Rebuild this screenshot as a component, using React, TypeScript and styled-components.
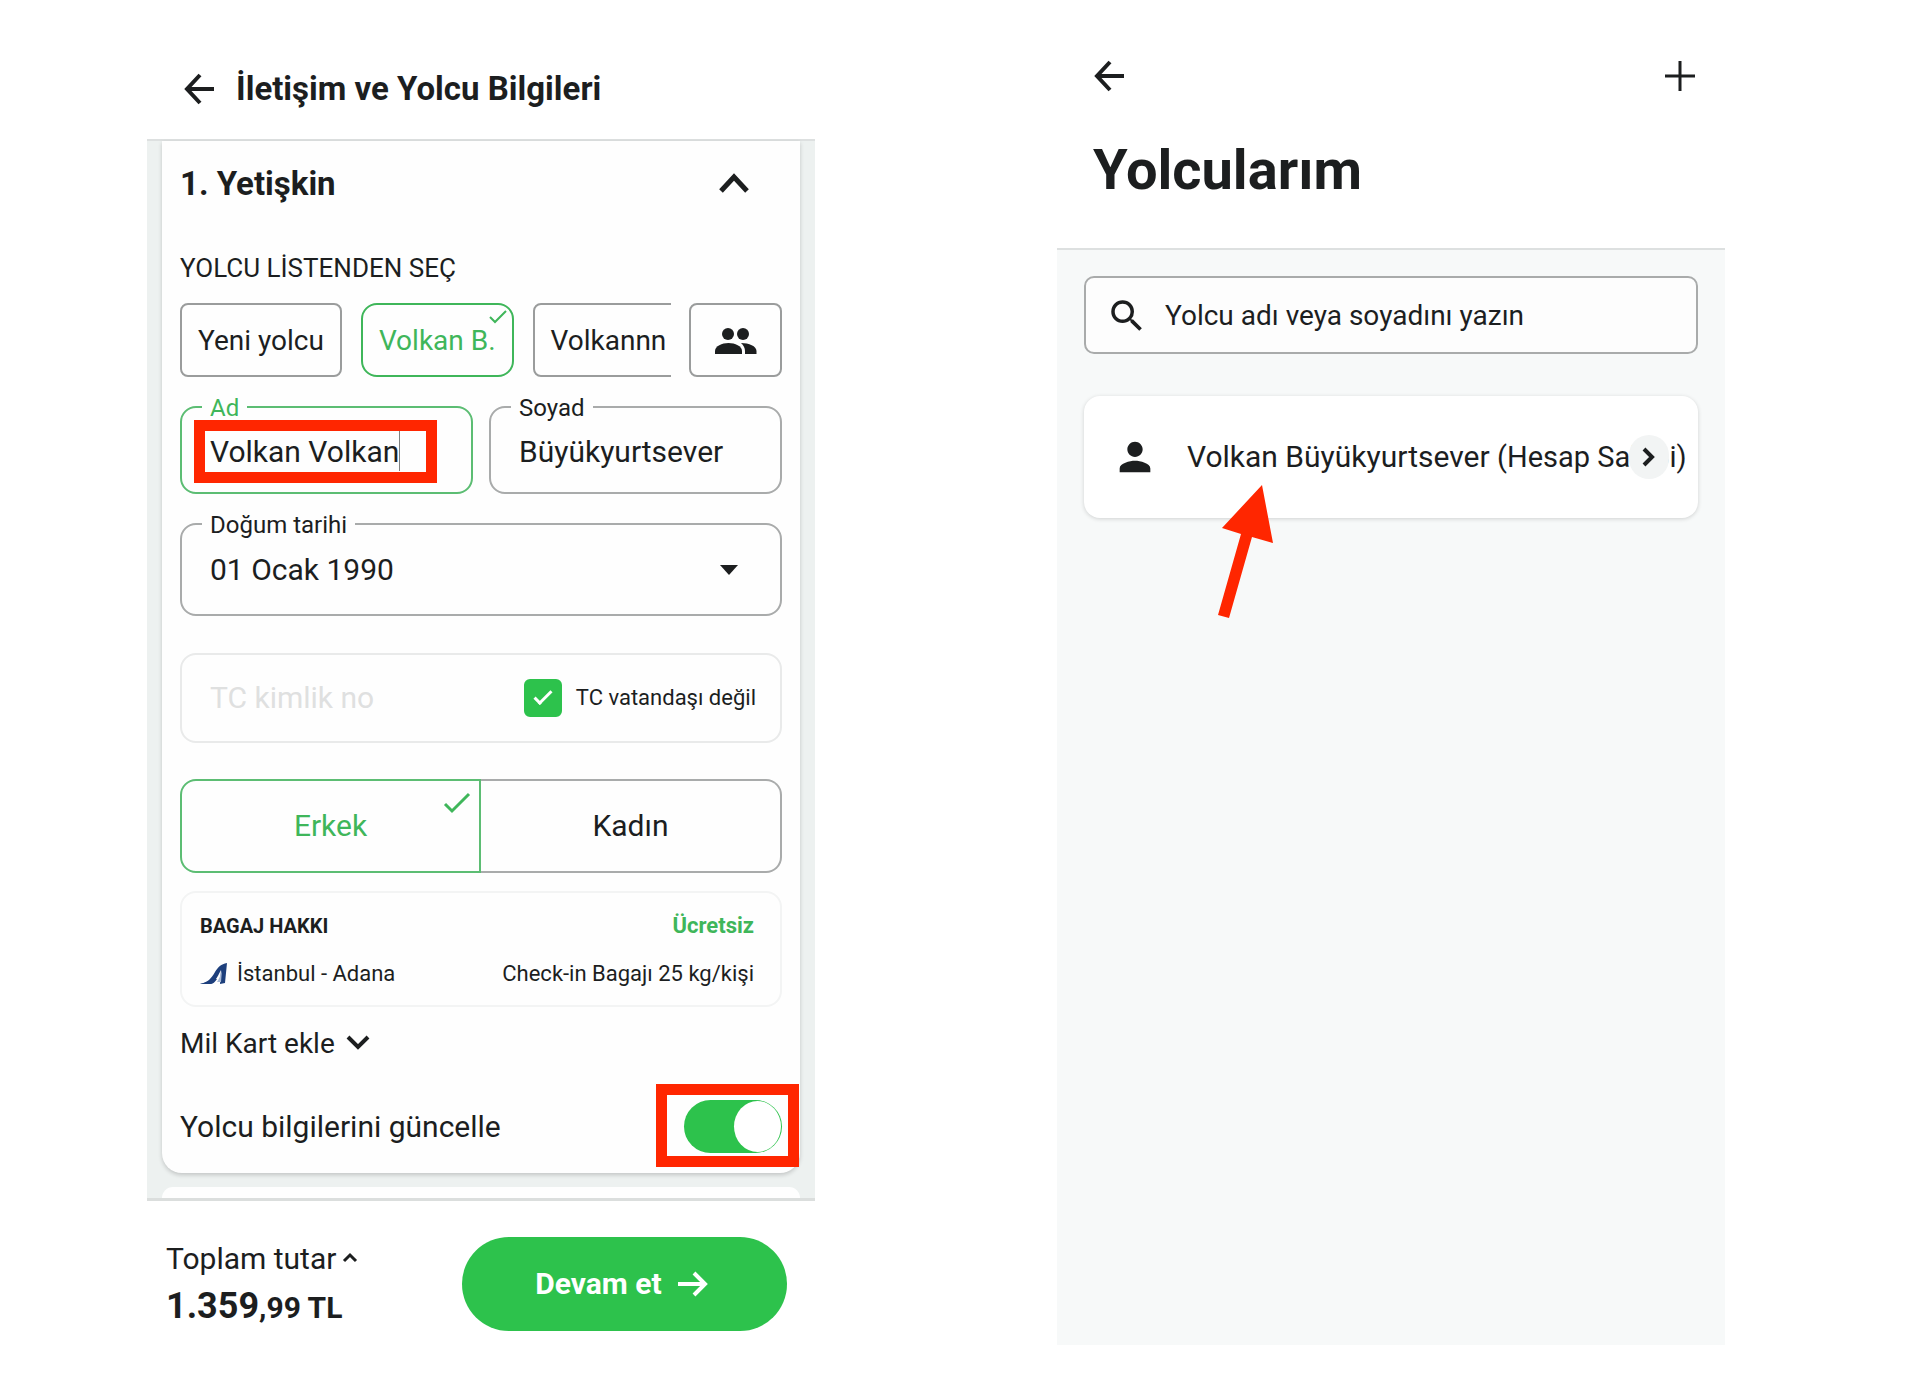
import React, { useState } from "react";
import styled, { createGlobalStyle, css } from "styled-components";
import { MdPerson, MdSearch } from "react-icons/md";

const ink = "#1c1e1f";
const green = "#2dc24c";
const greenInk = "#3fb65a";
const line = "#9a9c9c";
const red = "#ff2600";

const GlobalStyle = createGlobalStyle`
  *, *::before, *::after { box-sizing: border-box; }
  body {
    margin: 0;
    background: #fff;
    color: ${ink};
    font-family: Roboto, "Noto Sans", sans-serif;
    font-size: 30px;
    line-height: 36px;
  }
  button, input { font: inherit; color: inherit; }
  h1, h2, h3, p { margin: 0; }
  svg { display: block; flex: none; }
`;

const Page = styled.main`
  display: grid;
  grid-template-columns: minmax(0, 1fr) minmax(0, 1fr);
  gap: 242px;
  padding: 0 207px 36px 147px;
`;

const Screen = styled.section`
  display: flex;
  flex-direction: column;
`;

const IconButton = styled.button`
  display: flex;
  padding: 0;
  border: 0;
  background: none;
  cursor: pointer;
`;

/* ---------- Passenger form ---------- */

const FormHeader = styled.header`
  display: flex;
  align-items: center;
  gap: 21px;
  padding: 71px 36px 32px;
  border-bottom: 2px solid #dde0e0;
`;

const FormTitle = styled.h1`
  font-size: 33px;
  line-height: 36px;
  font-weight: 700;
`;

const FormBody = styled.div`
  padding: 0 15px;
  background: #edf1f0;
`;

const PassengerCard = styled.div`
  padding: 25px 18px 20px;
  background: #fefefe;
  border-radius: 0 0 20px 20px;
  box-shadow: 0 2px 4px rgba(0, 0, 0, 0.18);
`;

const CardHeading = styled.div`
  display: flex;
  align-items: center;
  justify-content: space-between;
  padding-right: 32px;
`;

const CardTitle = styled.h2`
  font-size: 33px;
  line-height: 36px;
  font-weight: 700;
`;

const ListLabel = styled.p`
  margin-top: 48px;
  font-size: 26px;
  line-height: 36px;
`;

const PickRow = styled.div`
  display: flex;
  gap: 18px;
  margin-top: 17px;
`;

const ChipStrip = styled.div`
  display: flex;
  flex: 1;
  gap: 19px;
  min-width: 0;
  overflow: hidden;
`;

const Chip = styled.button<{ $selected?: boolean }>`
  position: relative;
  flex: none;
  height: 74px;
  padding: 2px 16px 0;
  border: 2px solid ${(p) => (p.$selected ? greenInk : line)};
  border-radius: ${(p) => (p.$selected ? 16 : 8)}px;
  background: none;
  color: ${(p) => (p.$selected ? greenInk : ink)};
  font-size: 28px;
  white-space: nowrap;
`;

const ChipTick = styled.svg`
  position: absolute;
  top: 4px;
  right: 4px;
`;

const PeopleButton = styled(Chip)`
  display: flex;
  align-items: center;
  justify-content: center;
  width: 93px;
`;

const FieldRow = styled.div`
  display: grid;
  grid-template-columns: 1fr 1fr;
  gap: 16px;
  margin-top: 17px;
`;

const Field = styled.fieldset<{ $active?: boolean }>`
  position: relative;
  min-width: 0;
  margin: 0;
  padding: 0 28px;
  border: 2px solid ${(p) => (p.$active ? "#5cbd73" : "#a9abab")};
  border-radius: 16px;
`;

const Legend = styled.legend<{ $active?: boolean }>`
  margin-left: -8px;
  padding: 2px 8px 0;
  font-size: 24px;
  line-height: 24px;
  color: ${(p) => (p.$active ? greenInk : ink)};
`;

const TextInput = styled.input`
  width: 100%;
  height: 44px;
  margin: 9px 0 19px;
  padding: 0;
  border: 0;
  outline: 0;
  background: none;
`;

const Caret = styled.span`
  position: absolute;
  top: 11px;
  left: 217px;
  width: 1px;
  height: 40px;
  background: #7d8080;
`;

const NameHighlight = styled.span`
  position: absolute;
  top: 0;
  left: 12px;
  width: 243px;
  height: 63px;
  border: 11px solid ${red};
  pointer-events: none;
`;

const DateField = styled(Field)`
  display: block;
  margin-top: 17px;
`;

const DateButton = styled.button`
  display: flex;
  align-items: center;
  justify-content: space-between;
  width: 100%;
  height: 44px;
  margin: 11px 0 22px;
  padding: 0 14px 0 0;
  border: 0;
  background: none;
  text-align: left;
`;

const IdRow = styled.div`
  display: flex;
  align-items: center;
  height: 90px;
  margin-top: 37px;
  padding: 0 24px 0 28px;
  border: 2px solid #e9eaea;
  border-radius: 16px;
`;

const IdInput = styled.input`
  flex: 1;
  min-width: 0;
  padding: 0;
  border: 0;
  background: none;
  &::placeholder { color: #dfe0e0; opacity: 1; }
`;

const CheckLabel = styled.label`
  display: flex;
  align-items: center;
  gap: 14px;
  font-size: 22px;
`;

const Checkbox = styled.input`
  appearance: none;
  width: 38px;
  height: 38px;
  margin: 0;
  border: 2px solid ${line};
  border-radius: 6px;
  display: grid;
  place-items: center;
  &:checked { background: ${green}; border-color: ${green}; }
  &:checked::after {
    content: "";
    width: 18px;
    height: 9px;
    border: solid #fff;
    border-width: 0 0 3px 3px;
    transform: translateY(-3px) rotate(-45deg);
  }
`;

const Segment = styled.div`
  display: grid;
  grid-template-columns: 1fr 1fr;
  margin-top: 36px;
`;

const segmentOn = css`
  border-color: #5cbd73;
  color: ${greenInk};
`;

const SegmentButton = styled.button<{ $selected: boolean }>`
  position: relative;
  height: 94px;
  border: 2px solid #a9abab;
  background: none;
  ${(p) => p.$selected && segmentOn}
  &:first-child { border-radius: 16px 0 0 16px; }
  &:last-child { border-left: 0; border-radius: 0 16px 16px 0; }
`;

const SegmentTick = styled.svg`
  position: absolute;
  top: 10px;
  right: 8px;
`;

const Baggage = styled.div`
  display: grid;
  gap: 12px;
  margin-top: 18px;
  padding: 15px 26px 13px 18px;
  border: 2px solid #f3f4f4;
  border-radius: 16px;
  font-size: 22px;
`;

const Spread = styled.div`
  display: flex;
  align-items: center;
  justify-content: space-between;
`;

const BaggageTitle = styled.h3`
  font-size: 20px;
  line-height: 36px;
  font-weight: 700;
`;

const Free = styled.strong`
  color: ${greenInk};
  font-weight: 700;
`;

const Route = styled.span`
  display: flex;
  align-items: center;
  gap: 9px;
`;

const MilesButton = styled.button`
  display: flex;
  align-items: center;
  gap: 11px;
  margin-top: 19px;
  padding: 0;
  border: 0;
  background: none;
  font-size: 28px;
`;

const UpdateRow = styled.label`
  display: flex;
  align-items: center;
  justify-content: space-between;
  margin-top: 38px;
`;

const ToggleWrap = styled.span`
  position: relative;
  display: flex;
`;

const Toggle = styled.input`
  appearance: none;
  display: flex;
  width: 98px;
  height: 53px;
  margin: 0;
  padding: 1px;
  border-radius: 27px;
  background: #c9cccc;
  &::after {
    content: "";
    width: 47px;
    height: 51px;
    border-radius: 50%;
    background: #fff;
  }
  &:checked { justify-content: flex-end; background: ${green}; }
`;

const ToggleHighlight = styled.span`
  position: absolute;
  inset: -16px -17px -14px -28px;
  border: 11px solid ${red};
  pointer-events: none;
`;

const NextCard = styled.div`
  height: 11px;
  margin-top: 14px;
  border-radius: 20px 20px 0 0;
  background: #fefefe;
`;

const Footer = styled.footer`
  display: flex;
  align-items: center;
  justify-content: space-between;
  padding: 36px 28px 14px 19px;
  border-top: 3px solid #dbdedd;
`;

const TotalButton = styled.button`
  display: flex;
  align-items: center;
  gap: 6px;
  padding: 0;
  border: 0;
  background: none;
`;

const Price = styled.p`
  margin-top: 9px;
  line-height: 40px;
  font-weight: 700;
`;

const PriceWhole = styled.span`
  font-size: 36px;
`;

const ContinueButton = styled.button`
  display: flex;
  align-items: center;
  justify-content: center;
  gap: 16px;
  width: 325px;
  height: 94px;
  padding: 0 6px 0 0;
  border: 0;
  border-radius: 47px;
  background: ${green};
  color: #fff;
  font-weight: 700;
`;

/* ---------- Passenger list ---------- */

const ListHeader = styled.header`
  padding: 60px 29px 46px 36px;
  border-bottom: 2px solid #dde0e0;
`;

const ListTitle = styled.h1`
  margin-top: 46px;
  font-size: 56px;
  line-height: 64px;
  font-weight: 700;
`;

const ListBody = styled.div`
  flex: 1;
  padding: 26px 27px;
  background: #f7f9f9;
`;

const SearchBox = styled.label`
  display: flex;
  align-items: center;
  gap: 17px;
  height: 78px;
  padding: 2px 20px 0;
  border: 2px solid #a9abab;
  border-radius: 10px;
  background: #fdfdfd;
`;

const SearchInput = styled.input`
  flex: 1;
  min-width: 0;
  padding: 0;
  border: 0;
  outline: 0;
  background: none;
  font-size: 28px;
  &::placeholder { color: ${ink}; opacity: 1; }
`;

const PassengerRow = styled.button`
  position: relative;
  display: flex;
  align-items: center;
  gap: 29px;
  width: 100%;
  height: 122px;
  margin-top: 42px;
  padding: 0 0 0 28px;
  border: 0;
  border-radius: 16px;
  background: #fff;
  box-shadow: 0 1px 4px rgba(0, 0, 0, 0.16);
  white-space: nowrap;
`;

const OwnerNote = styled.span`
  font-size: 29px;
`;

const RowArrow = styled.span`
  position: absolute;
  right: 29px;
  display: grid;
  place-items: center;
  width: 40px;
  height: 44px;
  border-radius: 20px;
  background: #f2f4f4;
`;

const Pointer = styled.svg`
  position: absolute;
  top: 88px;
  left: 130px;
`;

type IconProps = { d: string; width: number; height: number; stroke: number };

const Stroke = ({ d, width, height, stroke }: IconProps) => (
  <svg
    width={width}
    height={height}
    viewBox={`0 0 ${width} ${height}`}
    fill="none"
    stroke="currentColor"
    strokeWidth={stroke}
    aria-hidden="true"
  >
    <path d={d} />
  </svg>
);

const BackIcon = () => (
  <Stroke width={32} height={32} stroke={4} d="M31 16H4M17 2L4 16l13 14" />
);

const PeopleIcon = () => (
  <svg width="42" height="26" viewBox="0 0 42 26" fill="currentColor" aria-hidden="true">
    <circle cx="13" cy="6" r="6" />
    <circle cx="28" cy="6" r="6" />
    <path d="M0 26v-3c0-5 7-8 13.500-8S27 18 27 23v3z" />
    <path d="M26 15c8 0 15.500 3 15.500 8v3H30v-3c0-3-1.500-6-4-8z" />
  </svg>
);

function PassengerForm() {
  const [gender, setGender] = useState("Erkek");
  return (
    <Screen>
      <FormHeader>
        <IconButton aria-label="Geri">
          <BackIcon />
        </IconButton>
        <FormTitle>İletişim ve Yolcu Bilgileri</FormTitle>
      </FormHeader>
      <FormBody>
        <PassengerCard>
          <CardHeading>
            <CardTitle>1. Yetişkin</CardTitle>
            <IconButton aria-label="Daralt">
              <Stroke width={32} height={22} stroke={5} d="M3 18L16 4l13 14" />
            </IconButton>
          </CardHeading>
          <ListLabel>YOLCU LİSTENDEN SEÇ</ListLabel>
          <PickRow>
            <ChipStrip>
              <Chip>Yeni yolcu</Chip>
              <Chip $selected>
                Volkan B.
                <ChipTick width="20" height="16" viewBox="0 0 20 16" fill="none" stroke="currentColor" strokeWidth="2" aria-hidden="true">
                  <path d="M2 8l5 5L18 2" />
                </ChipTick>
              </Chip>
              <Chip>Volkannn</Chip>
            </ChipStrip>
            <PeopleButton aria-label="Yolcularım">
              <PeopleIcon />
            </PeopleButton>
          </PickRow>
          <FieldRow>
            <Field $active>
              <Legend $active>
                <label htmlFor="ad">Ad</label>
              </Legend>
              <TextInput id="ad" defaultValue="Volkan Volkan" />
              <Caret />
              <NameHighlight />
            </Field>
            <Field>
              <Legend>
                <label htmlFor="soyad">Soyad</label>
              </Legend>
              <TextInput id="soyad" defaultValue="Büyükyurtsever" />
            </Field>
          </FieldRow>
          <DateField>
            <Legend>
              <label htmlFor="dogum">Doğum tarihi</label>
            </Legend>
            <DateButton id="dogum">
              01 Ocak 1990
              <svg width="18" height="10" viewBox="0 0 18 10" aria-hidden="true">
                <path d="M0 0h18L9 10z" fill={ink} />
              </svg>
            </DateButton>
          </DateField>
          <IdRow>
            <IdInput placeholder="TC kimlik no" aria-label="TC kimlik no" disabled />
            <CheckLabel>
              <Checkbox type="checkbox" defaultChecked />
              TC vatandaşı değil
            </CheckLabel>
          </IdRow>
          <Segment>
            {["Erkek", "Kadın"].map((name) => (
              <SegmentButton key={name} $selected={gender === name} onClick={() => setGender(name)}>
                {name}
                {gender === name && (
                  <SegmentTick width="28" height="24" viewBox="0 0 28 24" fill="none" stroke="currentColor" strokeWidth="3" aria-hidden="true">
                    <path d="M2 13l7 7L26 3" />
                  </SegmentTick>
                )}
              </SegmentButton>
            ))}
          </Segment>
          <Baggage>
            <Spread>
              <BaggageTitle>BAGAJ HAKKI</BaggageTitle>
              <Free>Ücretsiz</Free>
            </Spread>
            <Spread>
              <Route>
                <svg width="28" height="22" viewBox="0 0 28 22" aria-hidden="true">
                  <path d="M0 21c8-2 11-5 15-12 3-5 6-8 12-9l-2 20-5 1 1-14c-4 8-7 13-11 14z" fill="#1d3f7c" />
                  <path d="M0 21c5-1 8-2 11-5l6 0c-2 3-4 5-7 5z" fill="#1d3f7c" />
                  <path d="M17 19c2-3 4-7 5-12l-1 12z" fill="#a9bad6" />
                </svg>
                İstanbul - Adana
              </Route>
              <span>Check-in Bagajı 25 kg/kişi</span>
            </Spread>
          </Baggage>
          <MilesButton>
            Mil Kart ekle
            <Stroke width={24} height={20} stroke={4} d="M2 3l10 10L22 3" />
          </MilesButton>
          <UpdateRow>
            Yolcu bilgilerini güncelle
            <ToggleWrap>
              <Toggle type="checkbox" role="switch" defaultChecked />
              <ToggleHighlight />
            </ToggleWrap>
          </UpdateRow>
        </PassengerCard>
        <NextCard />
      </FormBody>
      <Footer>
        <div>
          <TotalButton>
            Toplam tutar
            <Stroke width={16} height={14} stroke={3} d="M2 9l6-6 6 6" />
          </TotalButton>
          <Price>
            <PriceWhole>1.359</PriceWhole>,99 TL
          </Price>
        </div>
        <ContinueButton>
          Devam et
          <Stroke width={30} height={26} stroke={4} d="M0 13h27M16 2l11 11-11 11" />
        </ContinueButton>
      </Footer>
    </Screen>
  );
}

function PassengerList() {
  return (
    <Screen>
      <ListHeader>
        <Spread>
          <IconButton aria-label="Geri">
            <BackIcon />
          </IconButton>
          <IconButton aria-label="Yolcu ekle">
            <Stroke width={32} height={32} stroke={3} d="M16 1v30M1 16h30" />
          </IconButton>
        </Spread>
        <ListTitle>Yolcularım</ListTitle>
      </ListHeader>
      <ListBody>
        <SearchBox>
          <MdSearch size={42} />
          <SearchInput placeholder="Yolcu adı veya soyadını yazın" aria-label="Yolcu ara" />
        </SearchBox>
        <PassengerRow>
          <MdPerson size={46} />
          <span>
            Volkan Büyükyurtsever <OwnerNote>(Hesap Sahibi)</OwnerNote>
          </span>
          <RowArrow>
            <Stroke width={14} height={20} stroke={4} d="M2 2l8 8-8 8" />
          </RowArrow>
          <Pointer width="60" height="136" viewBox="0 0 60 136" aria-hidden="true">
            <path d="M48 1l11 58-21-6-23 81-11-3 23-81-19-6z" fill={red} />
          </Pointer>
        </PassengerRow>
      </ListBody>
    </Screen>
  );
}

export default function App() {
  return (
    <>
      <GlobalStyle />
      <Page>
        <PassengerForm />
        <PassengerList />
      </Page>
    </>
  );
}
